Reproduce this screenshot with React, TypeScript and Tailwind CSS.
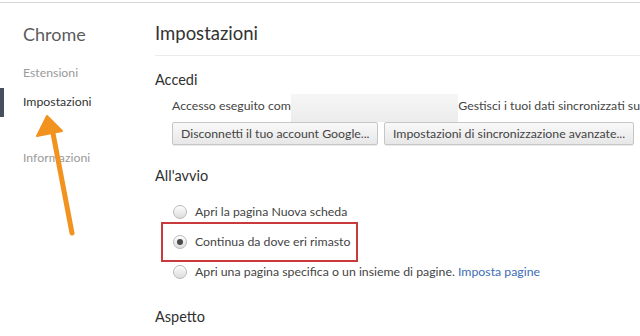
import React from 'react';

function Radio({ checked }: { checked?: boolean }) {
  return (
    <span className="flex h-[14px] w-[14px] shrink-0 items-center justify-center rounded-full border border-[#b9b9b9] bg-gradient-to-b from-[#fdfdfd] to-[#dcdcdc] shadow-[inset_0_1px_1px_rgba(255,255,255,0.8)]">
      {checked && <span className="h-[6px] w-[6px] rounded-full bg-[#4a4a4a]" />}
    </span>
  );
}

function Btn({ children, className = '' }: { children: React.ReactNode; className?: string }) {
  return (
    <button
      type="button"
      className={`h-[23px] rounded-[2px] border border-[#c6c6c6] bg-gradient-to-b from-[#f9f9f9] to-[#e7e7e7] px-[8px] text-[12.3px] leading-[21px] text-[#444] shadow-[0_1px_0_rgba(0,0,0,0.08)] ${className}`}
    >
      {children}
    </button>
  );
}

export default function App() {
  return (
    <div className="relative h-[336px] w-[640px] overflow-hidden bg-white font-['Lato','Noto_Sans',sans-serif] text-[#333]">
      <div className="h-[2px]" />
      <div className="border-t border-[#d6d6d6]" />

      <div className="flex">
        {/* sidebar */}
        <aside className="w-[155px] shrink-0">
          <div className="pl-[23px] pt-[19px] text-[18px] leading-[24px] text-[#5c5c5c]">Chrome</div>
          <div className="mt-[18px] pl-[23px] text-[12.3px] leading-[18px] text-[#9a9a9a]">Estensioni</div>
          <div className="mt-[6px] flex h-[29px] items-center">
            <span className="h-full w-[4px] bg-[#45505c]" />
            <span className="ml-[19px] text-[12.3px] text-[#333]">Impostazioni</span>
          </div>
          <div className="mt-[32px] pl-[23px] text-[12.3px] leading-[18px] text-[#9a9a9a]">Informazioni</div>
        </aside>

        {/* main */}
        <main className="min-w-0 flex-1 overflow-hidden whitespace-nowrap">
          <div className="pt-[18px] text-[18.5px] leading-[24px] text-[#333]">Impostazioni</div>
          <div className="mt-[10px] border-t border-[#ebebeb]" />

          <div className="mt-[14px] text-[14.5px] leading-[20px] text-[#303030]">Accedi</div>
          <div className="pl-[17px]">
            <div className="mt-[4px] flex h-[28px] items-start text-[12.3px] text-[#444]">
              <span className="mt-[3px] leading-[18px]">Accesso eseguito come</span>
              <span className="ml-[-6px] h-[28px] w-[167px] shrink-0 bg-gradient-to-b from-[#f6f6f6] to-[#ececec]" />
              <span className="mt-[3px] leading-[18px]">Gestisci i tuoi dati sincronizzati su google.com</span>
            </div>
            <div className="flex gap-[6px]">
              <Btn className="w-[206px]">Disconnetti il tuo account Google...</Btn>
              <Btn className="w-[250px]">Impostazioni di sincronizzazione avanzate...</Btn>
            </div>
          </div>

          <div className="mt-[21px] text-[14.5px] leading-[20px] text-[#303030]">All'avvio</div>
          <div className="relative mt-[11px] pl-[18px] text-[12.3px] text-[#444]">
            <div className="flex h-[30px] items-center gap-[8px]">
              <Radio />
              <span>Apri la pagina Nuova scheda</span>
            </div>
            <div className="flex h-[30px] items-center gap-[8px]">
              <Radio checked />
              <span>Continua da dove eri rimasto</span>
            </div>
            <div className="flex h-[30px] items-center gap-[8px]">
              <Radio />
              <span>
                Apri una pagina specifica o un insieme di pagine. <span className="text-[#3d6db5]">Imposta pagine</span>
              </span>
            </div>
            {/* highlight box */}
            <div className="absolute left-[6px] top-[25px] h-[40px] w-[197px] border-2 border-[#c93a3d]" />
          </div>

          <div className="mt-[20px] text-[14.5px] leading-[20px] text-[#303030]">Aspetto</div>
        </main>
      </div>

      {/* annotation arrow */}
      <svg className="pointer-events-none absolute left-0 top-0" width="160" height="260" viewBox="0 0 160 260">
        <line x1="72" y1="233" x2="52" y2="128" stroke="#f2921f" strokeWidth="5" strokeLinecap="round" />
        <polygon points="47,116 37,136 62,131" fill="#f2921f" stroke="#f2921f" strokeWidth="2" strokeLinejoin="round" />
      </svg>
    </div>
  );
}
